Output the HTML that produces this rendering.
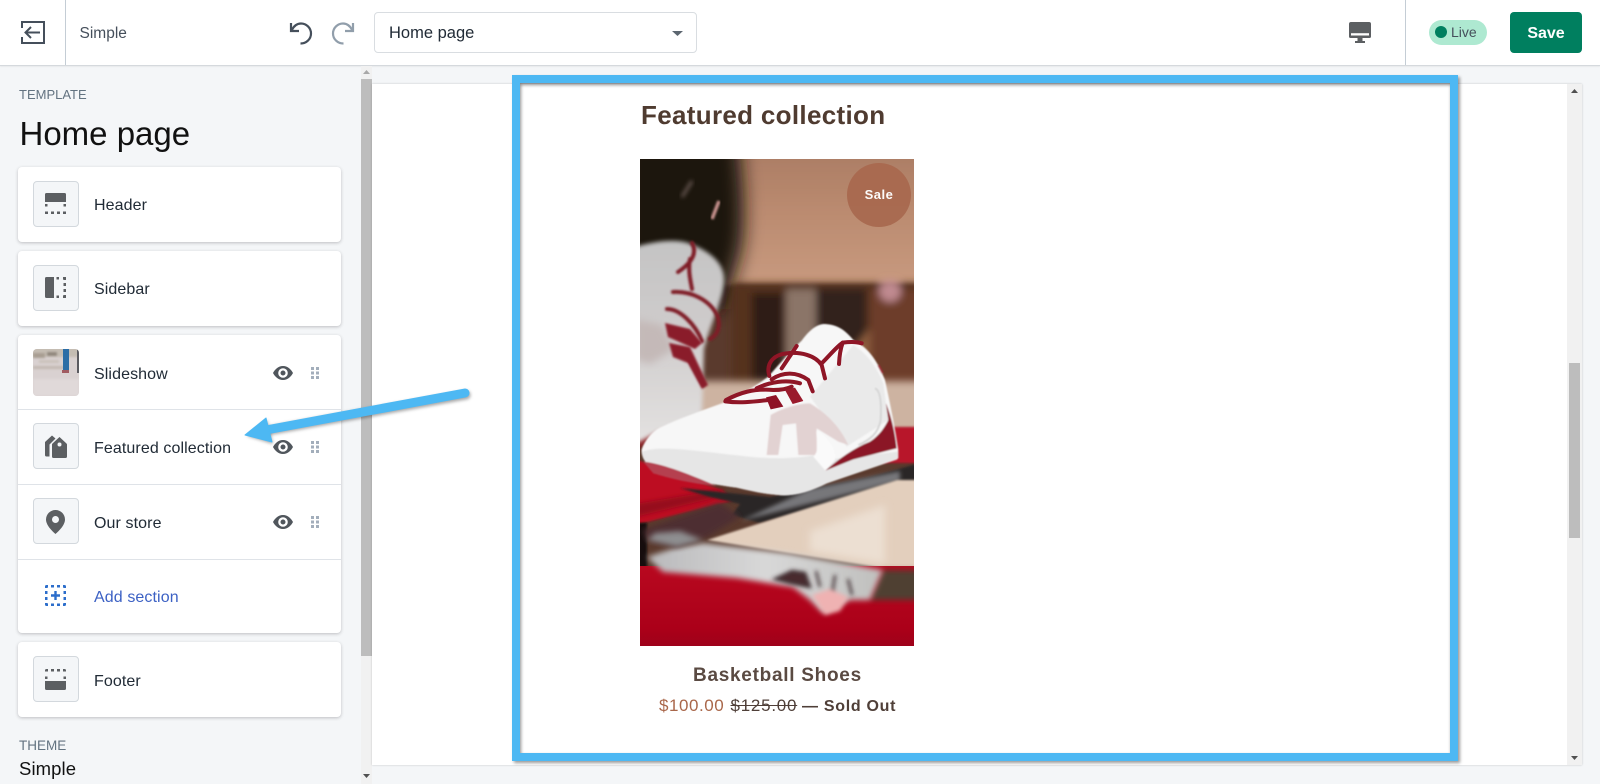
<!DOCTYPE html>
<html lang="en"><head><meta charset="utf-8"><title>Home page</title>
<style>
*{box-sizing:border-box}
html,body{margin:0;padding:0;width:1600px;height:784px;overflow:hidden;background:#f4f6f8;font-family:"Liberation Sans",sans-serif;color:#212b36}
.a{position:absolute;white-space:nowrap;line-height:1}
.bar{position:absolute;left:0;top:0;width:1600px;height:66px;background:#fff;border-bottom:1px solid #d5d9dd;box-shadow:0 1px 1px rgba(0,0,0,.05)}
.card{position:absolute;left:18px;width:323px;background:#fff;border-radius:4px;box-shadow:0 1px 3px rgba(63,63,68,.3)}
.box{position:absolute;left:33px;width:46px;height:46px;background:#f4f6f8;border:1px solid #d3d8dd;border-radius:4px}
.t{position:absolute;left:94px;font-size:16px;letter-spacing:.1px;line-height:1;color:#212b36;white-space:nowrap}
.div{position:absolute;left:18px;width:323px;height:1px;background:#dfe3e8}
svg{position:absolute;display:block;overflow:visible}
</style></head><body>

<div class="bar"></div>
<div class="a" style="left:65px;top:0;width:1px;height:65px;background:#c4cdd5"></div>
<div class="a" style="left:1405px;top:0;width:1px;height:65px;background:#c4cdd5"></div>

<svg style="left:21px;top:21px" width="24" height="23" viewBox="0 0 24 23" fill="none" stroke="#454f5b" stroke-width="2"><path d="M1 7V1H23V22H1V16"/><path d="M19 11.500H5M10 6L4.500 11.500L10 17"/></svg>
<div class="a" style="left:79.500px;top:26px;font-size:15.500px;color:#454f5b">Simple</div>
<svg style="left:288px;top:20px" width="25" height="25" viewBox="0 0 25 25" fill="none" stroke="#454f5b" stroke-width="2.200"><path d="M3 3V11H11"/><path d="M3.500 10.500C6 5.500 9.500 3.500 13 3.500C18.500 3.500 23 8 23 13.500C23 19 18.500 23.500 12.500 23.500"/></svg>
<svg style="left:331px;top:20px" width="25" height="25" viewBox="0 0 25 25" fill="none" stroke="#919eab" stroke-width="2.200"><path d="M22 3V11H14"/><path d="M21.500 10.500C19 5.500 15.500 3.500 12 3.500C6.500 3.500 2 8 2 13.500C2 19 6.500 23.500 12.500 23.500"/></svg>
<div class="a" style="left:374px;top:12px;width:323px;height:41px;background:#fff;border:1px solid #d9dde1;border-radius:4px"></div>
<div class="a" style="left:389px;top:25px;font-size:16.500px;color:#212b36">Home page</div>
<svg style="left:672px;top:31px" width="11" height="5" viewBox="0 0 11 5"><path d="M0 0H11L5.500 5Z" fill="#5c6670"/></svg>

<svg style="left:1349px;top:22px" width="22" height="21" viewBox="0 0 22 21"><path d="M2 0H20A2 2 0 0 1 22 2V14.500A1.500 1.500 0 0 1 20.500 16H1.500A1.500 1.500 0 0 1 0 14.500V2A2 2 0 0 1 2 0Z" fill="#5c5f62"/><rect x="2" y="11.200" width="18" height="2.300" fill="#fff"/><path d="M8.500 16H13.500V19H16V21H6V19H8.500Z" fill="#5c5f62"/></svg>
<div class="a" style="left:1429px;top:20px;width:58px;height:25px;background:#aee9d1;border-radius:13px"></div>
<div class="a" style="left:1435px;top:26px;width:12px;height:12px;background:#007f5f;border-radius:50%"></div>
<div class="a" style="left:1451px;top:24.500px;font-size:14px;color:#454f5b">Live</div>
<div class="a" style="left:1510px;top:12px;width:72px;height:41px;background:#007f5f;border-radius:4px;color:#fff;font-weight:bold;font-size:16px;line-height:43px;text-align:center">Save</div>

<!-- left sidebar scrollbar -->
<div class="a" style="left:361px;top:66px;width:11px;height:718px;background:#f1f1f1"></div>
<div class="a" style="left:361px;top:79px;width:11px;height:577px;background:#bdbdbd"></div>
<svg style="left:363px;top:70px" width="7" height="4" viewBox="0 0 7 4"><path d="M0 4H7L3.500 0Z" fill="#a8a8a8"/></svg>
<svg style="left:363px;top:774px" width="7" height="4" viewBox="0 0 7 4"><path d="M0 0H7L3.500 4Z" fill="#505050"/></svg>

<div class="a" style="left:19px;top:87.500px;font-size:13px;color:#637381">TEMPLATE</div>
<div class="a" style="left:19.500px;top:117px;font-size:33px;color:#111">Home page</div>

<div class="card" style="top:167px;height:75px"></div>
<div class="box" style="top:181px"></div>
<svg style="left:45px;top:193px" width="21" height="21" viewBox="0 0 21 21"><path d="M1.500 0H19.500A1.500 1.500 0 0 1 21 1.500V9H0V1.500A1.500 1.500 0 0 1 1.500 0Z" fill="#5c5f62"/><path d="M0 11H2.500V13.500H0ZM18.500 11H21V13.500H18.500ZM0 18.500H3V21H0ZM6 18.500H9V21H6ZM12 18.500H15V21H12ZM18 18.500H21V21H18Z" fill="#5c5f62"/></svg>
<div class="t" style="top:198px">Header</div>

<div class="card" style="top:251px;height:75px"></div>
<div class="box" style="top:265px"></div>
<svg style="left:45px;top:277px" width="21" height="21" viewBox="0 0 21 21"><path d="M1.500 0H9V21H1.500A1.500 1.500 0 0 1 0 19.500V1.500A1.500 1.500 0 0 1 1.500 0Z" fill="#5c5f62"/><path d="M11.500 0H14V2.500H11.500ZM18 0H21V3H18.500V2.500H18ZM18.500 6H21V9H18.500ZM18.500 12H21V15H18.500ZM18.500 18H21V21H18V18.500H18.500ZM11.500 18.500H14V21H11.500Z" fill="#5c5f62"/></svg>
<div class="t" style="top:282px">Sidebar</div>

<div class="card" style="top:335px;height:298px"></div>
<svg style="left:33px;top:349px;border-radius:4px" width="46" height="47" viewBox="0 0 46 47">
<defs><filter id="th"><feGaussianBlur stdDeviation="1"/></filter><clipPath id="thc"><rect width="46" height="47" rx="4"/></clipPath></defs>
<g clip-path="url(#thc)"><rect width="46" height="47" fill="#d9d1d1"/><g filter="url(#th)"><rect x="-2" y="-2" width="50" height="10" fill="#c4bcb2"/><rect x="0" y="17" width="32" height="3" fill="#c2b9b2"/><rect x="0" y="4" width="12" height="5" fill="#a89e92"/><rect x="14" y="3" width="10" height="4" fill="#8f867c"/><rect x="6" y="11" width="20" height="3" fill="#cbc2bb"/><rect y="30" width="46" height="17" fill="#e0d9d9"/></g>
<rect x="30" y="0" width="6" height="21" fill="#2b6da6"/><rect x="44" y="0" width="2" height="24" fill="#5a5a60"/><rect x="29" y="21" width="7" height="3" fill="#a05a60"/></g></svg>
<div class="t" style="top:367px">Slideshow</div>
<div class="div" style="top:409px"></div>
<div class="box" style="top:423px"></div>
<svg style="left:45px;top:435px" width="22" height="23" viewBox="0 0 22 23"><path d="M0 7L7 0.500L10.500 3.500L4.500 9.500V21.500H1.500A1.500 1.500 0 0 1 0 20Z" fill="#5c5f62"/><path d="M14.500 2L21.500 8.500A1.500 1.500 0 0 1 22 9.600V21.500A1.500 1.500 0 0 1 20.500 23H8.500A1.500 1.500 0 0 1 7 21.500V9.600A1.500 1.500 0 0 1 7.500 8.500ZM14.500 7.500A2 2 0 1 0 14.500 11.500A2 2 0 1 0 14.500 7.500Z" fill="#5c5f62" fill-rule="evenodd"/></svg>
<div class="t" style="top:441px">Featured collection</div>
<div class="div" style="top:484px"></div>
<div class="box" style="top:498px"></div>
<svg style="left:46px;top:510px" width="19" height="24" viewBox="0 0 19 24"><path d="M9.500 0A9.500 9.500 0 0 1 19 9.500C19 15 13 21 9.500 24C6 21 0 15 0 9.500A9.500 9.500 0 0 1 9.500 0ZM9.500 6A3.500 3.500 0 1 0 9.500 13A3.500 3.500 0 1 0 9.500 6Z" fill="#5c5f62" fill-rule="evenodd"/></svg>
<div class="t" style="top:516px">Our store</div>
<div class="div" style="top:559px"></div>
<svg style="left:45px;top:585px" width="21" height="21" viewBox="0 0 21 21"><path d="M0 1.500A1.500 1.500 0 0 1 1.500 0H3V2.500H2.500V3H0ZM6 0H9V2.500H6ZM12 0H15V2.500H12ZM18 0H19.500A1.500 1.500 0 0 1 21 1.500V3H18.500V2.500H18ZM0 6H2.500V9H0ZM18.500 6H21V9H18.500ZM0 12H2.500V15H0ZM18.500 12H21V15H18.500ZM0 18H2.500V18.500H3V21H1.500A1.500 1.500 0 0 1 0 19.500ZM6 18.500H9V21H6ZM12 18.500H15V21H12ZM18.500 18H21V19.500A1.500 1.500 0 0 1 19.500 21H18V18.500H18.500ZM9.300 6H11.700V9.300H15V11.700H11.700V15H9.300V11.700H6V9.300H9.300Z" fill="#2c6ecb"/></svg>
<div class="t" style="top:590px;color:#3c61c4">Add section</div>

<div class="card" style="top:642px;height:75px"></div>
<div class="box" style="top:656px"></div>
<svg style="left:45px;top:669px" width="21" height="21" viewBox="0 0 21 21"><path d="M0 1.500A1.500 1.500 0 0 1 1.500 0H3V2.500H0ZM6 0H9V2.500H6ZM12 0H15V2.500H12ZM18 0H19.500A1.500 1.500 0 0 1 21 1.500V2.500H18ZM0 7.500H2.500V10H0ZM18.500 7.500H21V10H18.500Z" fill="#5c5f62"/><path d="M0 12H21V19.500A1.500 1.500 0 0 1 19.500 21H1.500A1.500 1.500 0 0 1 0 19.500Z" fill="#5c5f62"/></svg>
<div class="t" style="top:674px">Footer</div>

<!-- eye + drag icons -->
<svg style="left:273px;top:366px" width="20" height="14" viewBox="0 0 20 14"><path d="M10 0C15 0 18.500 4 20 7C18.500 10 15 14 10 14C5 14 1.500 10 0 7C1.500 4 5 0 10 0ZM10 2.200A4.800 4.800 0 1 0 10 11.800A4.800 4.800 0 1 0 10 2.200ZM10 4.500A2.500 2.500 0 1 1 10 9.500A2.500 2.500 0 1 1 10 4.500Z" fill="#50565c" fill-rule="evenodd"/></svg>
<svg style="left:273px;top:440px" width="20" height="14" viewBox="0 0 20 14"><path d="M10 0C15 0 18.500 4 20 7C18.500 10 15 14 10 14C5 14 1.500 10 0 7C1.500 4 5 0 10 0ZM10 2.200A4.800 4.800 0 1 0 10 11.800A4.800 4.800 0 1 0 10 2.200ZM10 4.500A2.500 2.500 0 1 1 10 9.500A2.500 2.500 0 1 1 10 4.500Z" fill="#50565c" fill-rule="evenodd"/></svg>
<svg style="left:273px;top:515px" width="20" height="14" viewBox="0 0 20 14"><path d="M10 0C15 0 18.500 4 20 7C18.500 10 15 14 10 14C5 14 1.500 10 0 7C1.500 4 5 0 10 0ZM10 2.200A4.800 4.800 0 1 0 10 11.800A4.800 4.800 0 1 0 10 2.200ZM10 4.500A2.500 2.500 0 1 1 10 9.500A2.500 2.500 0 1 1 10 4.500Z" fill="#50565c" fill-rule="evenodd"/></svg>
<svg style="left:311px;top:367px" width="8" height="12" viewBox="0 0 8 12" fill="#a3aebb"><path d="M0 0H3V3H0ZM5 0H8V3H5ZM0 4.500H3V7.500H0ZM5 4.500H8V7.500H5ZM0 9H3V12H0ZM5 9H8V12H5Z"/></svg>
<svg style="left:311px;top:441px" width="8" height="12" viewBox="0 0 8 12" fill="#a3aebb"><path d="M0 0H3V3H0ZM5 0H8V3H5ZM0 4.500H3V7.500H0ZM5 4.500H8V7.500H5ZM0 9H3V12H0ZM5 9H8V12H5Z"/></svg>
<svg style="left:311px;top:516px" width="8" height="12" viewBox="0 0 8 12" fill="#a3aebb"><path d="M0 0H3V3H0ZM5 0H8V3H5ZM0 4.500H3V7.500H0ZM5 4.500H8V7.500H5ZM0 9H3V12H0ZM5 9H8V12H5Z"/></svg>

<div class="a" style="left:19px;top:739px;font-size:13.500px;color:#637381">THEME</div>
<div class="a" style="left:19px;top:760px;font-size:18.500px;letter-spacing:.1px;color:#111">Simple</div>

<!-- preview frame -->
<div class="a" style="left:372px;top:84px;width:1210px;height:681px;background:#fff;box-shadow:0 0 2px rgba(0,0,0,.2)"></div>
<div class="a" style="left:1567px;top:84px;width:15px;height:681px;background:#f1f1f1"></div>
<div class="a" style="left:1569px;top:363px;width:11px;height:175px;background:#bdbdbd"></div>
<svg style="left:1571px;top:89px" width="7" height="4" viewBox="0 0 7 4"><path d="M0 4H7L3.500 0Z" fill="#505050"/></svg>
<svg style="left:1571px;top:756px" width="7" height="4" viewBox="0 0 7 4"><path d="M0 0H7L3.500 4Z" fill="#505050"/></svg>

<div class="a" style="left:641px;top:102px;font-size:26px;font-weight:bold;letter-spacing:.32px;color:#4f3b30">Featured collection</div>

<!-- product photo -->
<svg style="left:640px;top:159px;overflow:hidden" width="274" height="487" viewBox="0 0 274 487">
<defs>
<filter id="b8" x="-30%" y="-30%" width="160%" height="160%"><feGaussianBlur stdDeviation="9"/></filter>
<filter id="b4" x="-30%" y="-30%" width="160%" height="160%"><feGaussianBlur stdDeviation="4"/></filter>
<filter id="b3" x="-30%" y="-30%" width="160%" height="160%"><feGaussianBlur stdDeviation="3"/></filter>
<filter id="b2" x="-30%" y="-30%" width="160%" height="160%"><feGaussianBlur stdDeviation="2"/></filter>
<filter id="b1" x="-20%" y="-20%" width="140%" height="140%"><feGaussianBlur stdDeviation="1"/></filter>
<filter id="bm" x="-10%" y="-10%" width="120%" height="120%"><feGaussianBlur stdDeviation="2"/></filter>
<linearGradient id="tan" x1="0" y1="0" x2="0" y2="1"><stop offset="0" stop-color="#a87a62"/><stop offset=".5" stop-color="#bb8b70"/><stop offset="1" stop-color="#c89a7f"/></linearGradient>
<linearGradient id="redb" x1="0" y1="0" x2="0" y2="1"><stop offset="0" stop-color="#b8081f"/><stop offset=".7" stop-color="#ab0019"/><stop offset="1" stop-color="#96021a"/></linearGradient>
<linearGradient id="refl" x1="0" y1="0" x2="1" y2="0"><stop offset="0" stop-color="#b9b9bb"/><stop offset=".5" stop-color="#d8d8d8"/><stop offset="1" stop-color="#bfbfbd"/></linearGradient>
<linearGradient id="ls" x1="0" y1="0" x2="0" y2="1"><stop offset="0" stop-color="#c4c4c4"/><stop offset=".45" stop-color="#cfcccc"/><stop offset="1" stop-color="#e4e2e1"/></linearGradient>
</defs>
<rect width="274" height="487" fill="#5a3a2d"/>
<!-- backdrop -->
<rect x="70" y="-20" width="224" height="146" fill="url(#tan)" filter="url(#b2)"/>
<path d="M-20 -20H98C104 30 106 70 100 95L84 150H-20Z" fill="#1d1311" filter="url(#b8)"/>
<path d="M72 60L79 42" stroke="#c9938f" stroke-width="3.500" filter="url(#b1)"/>
<path d="M42 38L52 22" stroke="#6b5a55" stroke-width="3" filter="url(#b2)"/>
<g filter="url(#b4)">
<rect x="92" y="124" width="200" height="110" fill="#54321f"/>
<rect x="112" y="134" width="32" height="90" fill="#2f1a12"/>
<rect x="146" y="130" width="30" height="90" fill="#8b7568"/>
<rect x="176" y="130" width="50" height="60" fill="#33201a"/>
<path d="M205 200L245 150L262 150L225 205Z" fill="#8d5d3d"/>
<rect x="230" y="130" width="60" height="100" fill="#6d3e2a"/>
<circle cx="250" cy="132" r="11" fill="#c08a90"/>
</g>
<path d="M55 222H290V274H55Z" fill="#cdb3a1" filter="url(#b4)"/>

<!-- floor -->
<rect x="240" y="268" width="50" height="36" fill="#b8192a" filter="url(#b1)"/>
<path d="M-5 268H60L20 282L-5 290Z" fill="#8f2028" filter="url(#b2)"/>
<path d="M-5 300L82 331L95 341L-5 366Z" fill="#bd0a22" filter="url(#b1)"/>
<path d="M-5 345L85 330L70 340L-5 358Z" fill="#960a1c" filter="url(#b2)"/>
<!-- black reflective wedge -->
<path d="M40 329L130 338L230 318L280 304V321L120 364L92 356L100 345L70 338Z" fill="#2a2628" filter="url(#b1)"/>
<path d="M100 362L170 330L260 312V322Z" fill="#77777a" filter="url(#b2)"/>
<!-- cream plane -->
<path d="M67 381L257 321H280V415L147 394Z" fill="#e3cfbd" filter="url(#b1)"/>
<path d="M170 372L245 346V405L170 392Z" fill="#ecdfd2" filter="url(#b4)"/>
<!-- left reflection -->
<rect x="-5" y="364" width="12" height="50" fill="#15100f" filter="url(#b1)"/>
<rect x="-5" y="407" width="290" height="90" fill="url(#redb)"/>
<path d="M243 411H285V441H230Z" fill="#4f3f33" filter="url(#b3)"/>
<path d="M7 398L37 388L63 384L147 394L243 411L230 441L210 441L183 454L170 441L153 428L97 419L23 413Z" fill="url(#refl)" filter="url(#b3)"/>
<path d="M3 371L80 344L100 358L67 378L37 388L7 381Z" fill="#4d2f33" filter="url(#b3)"/>
<path d="M7 381L37 388L63 381L40 372L15 374Z" fill="#8e8e90" filter="url(#b3)"/>
<path d="M135 420L152 412L165 414L170 428L150 424ZM176 412L180 428M195 416L192 436M208 420L212 436" fill="#4a2a2e" stroke="#3a2a2e" stroke-width="2.500" filter="url(#b2)"/>
<path d="M172 436L190 430L208 438L200 452L185 456Z" fill="#efb2b2" filter="url(#b2)"/>

<!-- left blurred shoe -->
<path d="M-5 88C15 82 35 80 48 84C70 92 84 104 84 120C84 140 72 160 64 190L63 224L62 258L20 272L-5 285Z" fill="url(#ls)" filter="url(#b2)"/>
<path d="M-5 160L22 166L35 190L10 205L-5 200Z" fill="#c4b9b8" filter="url(#b4)"/>
<g fill="none" stroke="#7f1d28" stroke-width="4" filter="url(#b1)" stroke-linecap="round">
<path d="M52 84C58 95 50 105 38 113"/>
<path d="M50 100C48 110 50 120 52 130"/>
<path d="M33 133C50 132 70 140 78 158C80 168 78 176 70 180"/>
<path d="M27 150C40 150 55 165 62 182"/>
<path d="M46 195L63 226" stroke-width="3"/>
</g>
<path d="M25 164L50 170L62 184L55 190L28 178Z" fill="#8a1e2a" filter="url(#b1)"/>
<path d="M29 184L50 188L68 226L62 230L48 204L33 198Z" fill="#8a1e2a" filter="url(#b1)"/>

<!-- main shoe (coordinates in 3x crop space) -->
<g transform="translate(0,161) scale(.33333)">
<g filter="url(#bm)">
<path d="M550 12C585 12 612 25 640 60C690 85 715 130 735 180C750 250 765 320 775 390L772 418L560 490C510 515 460 530 415 525C370 522 330 512 290 503C200 490 120 475 40 445C15 430 3 410 5 388C15 360 35 335 60 322C120 295 190 270 260 245C300 225 345 200 385 170C420 130 455 90 485 62C505 35 525 15 550 12Z" fill="#f7f7f7"/>
<path d="M640 75C680 100 710 140 730 190L745 300L620 380L510 230Z" fill="#eaeaea"/>
<!-- mesh -->
<path d="M392 285C430 262 480 250 510 250C560 280 600 320 625 375L595 365L530 325L530 405L475 405L468 310L428 315L415 405H380Z" fill="#e2d2d2"/>
<!-- sole -->
<path d="M8 395C60 372 200 398 350 412C420 417 480 414 525 405L550 420L775 395V415L560 490C510 515 460 530 415 525C370 522 330 512 290 503C200 490 120 475 40 445C15 430 3 410 8 395Z" fill="#e6e6e6"/>
<path d="M10 425C60 430 130 455 230 498C150 490 90 475 40 460Z" fill="#b5404f"/>
<path d="M530 330C560 350 590 385 585 420L556 452L520 410C545 385 525 350 530 330Z" fill="#fafafa"/>
<!-- maroon heel -->
<path d="M738 250C750 280 765 330 770 385L640 418L556 452C600 415 640 385 690 365C720 345 735 320 745 300Z" fill="#8b1526"/>
<path d="M705 205C720 210 725 245 722 300C715 340 690 360 655 375" fill="none" stroke="#d5d5d5" stroke-width="6"/>
<path d="M715 135L728 160" stroke="#a42a38" stroke-width="6"/>
</g>
<!-- laces -->
<g fill="none" stroke="#8f1226" stroke-width="12" stroke-linecap="round" stroke-linejoin="round" filter="url(#b1)">
<path d="M388 168C378 135 395 105 440 100C480 95 525 105 545 135L555 175"/>
<path d="M545 130C570 105 590 80 608 68C630 65 650 65 665 70"/>
<path d="M608 68C602 85 598 110 597 132"/>
<path d="M470 78L425 145"/>
<path d="M395 178C430 155 470 155 505 180L518 214"/>
<path d="M350 205C390 185 440 178 480 190"/>
<path d="M258 240C300 218 340 205 400 210C425 210 445 205 455 200"/>
<path d="M256 244C300 250 340 245 385 240"/>
</g>
<path d="M378 232L408 225L430 260L392 268Z" fill="#8f1226"/>
<path d="M435 210L465 203L490 243L458 252Z" fill="#9a1a2c"/>
</g>
</svg>
<div class="a" style="left:847px;top:163px;width:64px;height:64px;background:#a96a50;border-radius:50%;color:#fff;font-weight:bold;font-size:13px;line-height:64px;text-align:center;letter-spacing:.5px;opacity:.97">Sale</div>

<div class="a" style="left:693px;top:666px;font-size:19px;font-weight:bold;letter-spacing:.72px;color:#5a4a42">Basketball Shoes</div>
<div class="a" style="left:659px;top:697px;font-size:17px;letter-spacing:.55px;color:#a9674a">$100.00</div>
<div class="a" style="left:730.500px;top:697px;font-size:17px;letter-spacing:.75px;color:#4f3f38;text-decoration:line-through">$125.00</div>
<div class="a" style="left:802px;top:699px;font-size:16px;font-weight:bold;letter-spacing:.7px;color:#4f3f38">— Sold Out</div>

<!-- blue highlight -->
<div class="a" style="left:512px;top:75px;width:946px;height:686px;border:8px solid #4db8f3;box-shadow:2px 2px 3px rgba(0,0,0,.4),inset 1px 2px 3px rgba(0,0,0,.45)"></div>

<!-- arrow -->
<svg style="left:0;top:0;pointer-events:none" width="1600" height="784" viewBox="0 0 1600 784">
<defs><filter id="as" x="-10%" y="-30%" width="120%" height="160%"><feGaussianBlur stdDeviation="1.500"/></filter></defs>
<path d="M465 393L266 429" stroke="#000" stroke-opacity=".35" stroke-width="9" stroke-linecap="round" filter="url(#as)" transform="translate(1,2)"/>
<path d="M246 434L266 418L272 442Z" fill="#000" fill-opacity=".35" filter="url(#as)" transform="translate(1,2)"/>
<path d="M465 393L266 430" stroke="#4db8f3" stroke-width="9" stroke-linecap="round"/>
<path d="M245 435L266 418L272 442Z" fill="#4db8f3" stroke="#4db8f3" stroke-width="1" stroke-linejoin="round"/>
</svg>
</body></html>
